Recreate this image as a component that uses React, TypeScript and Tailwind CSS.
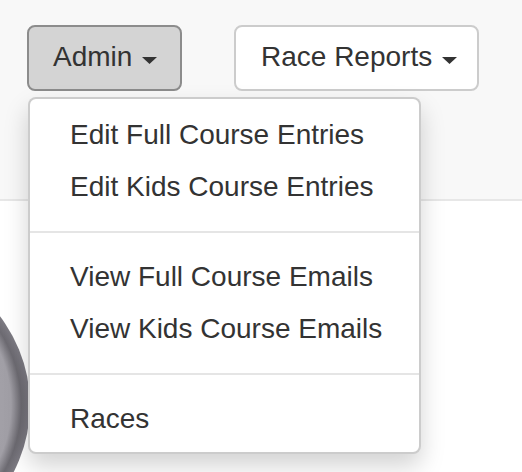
import React from 'react';

const Caret: React.FC = () => (
  <svg width="15" height="7" viewBox="0 0 15 7" className="mt-[6px] shrink-0">
    <polygon points="0,0 15,0 7.5,7" fill="#333333" />
  </svg>
);

const menuGroups: string[][] = [
  ['Edit Full Course Entries', 'Edit Kids Course Entries'],
  ['View Full Course Emails', 'View Kids Course Emails'],
  ['Races'],
];

const App: React.FC = () => {
  return (
    <div className="relative w-[522px] h-[472px] overflow-hidden bg-white text-[#333333] font-['Liberation_Sans',Arial,sans-serif]">
      <nav className="h-[201px] bg-[#f8f8f8] border-b-2 border-[#e7e7e7] flex items-start pt-[25px] pl-[27px] gap-[52px]">
        <div className="relative">
          <button className="w-[155px] h-[66px] pb-[2px] pl-[24px] flex items-center gap-[10px] bg-[#d4d4d4] border-2 border-[#8c8c8c] rounded-[8px] text-[28px] leading-[40px]">
            <span>Admin</span>
            <Caret />
          </button>

          <div className="absolute z-10 left-[1px] top-[72px] w-[393px] bg-white border-2 border-black/20 rounded-[8px] pt-[10px] pb-[7px] shadow-[0_12px_24px_rgba(0,0,0,0.175)]">
            {menuGroups.map((group, gi) => (
              <div key={gi}>
                {gi > 0 && <div className="h-[2px] my-[18px] bg-[#e5e5e5]" />}
                {group.map((item) => (
                  <div key={item} className="px-[40px] py-[6px] text-[28px] leading-[40px] whitespace-nowrap">
                    {item}
                  </div>
                ))}
              </div>
            ))}
          </div>
        </div>

        <button className="w-[245px] h-[66px] pb-[2px] pl-[25px] flex items-center gap-[10px] bg-white border-2 border-[#cccccc] rounded-[8px] text-[28px] leading-[40px]">
          <span>Race Reports</span>
          <Caret />
        </button>
      </nav>

      <main>
        <svg width="45" height="271" viewBox="0 201 45 271" className="block">
          <defs>
            <radialGradient id="ring" gradientUnits="userSpaceOnUse" cx="-116" cy="405" r="146">
              <stop offset="0" stopColor="#b0aeb5" />
              <stop offset="0.87" stopColor="#a19fa6" />
              <stop offset="0.94" stopColor="#6c6a71" />
              <stop offset="1" stopColor="#7d7b83" />
            </radialGradient>
          </defs>
          <circle cx="-116" cy="405" r="146" fill="url(#ring)" />
        </svg>
      </main>
    </div>
  );
};

export default App;
